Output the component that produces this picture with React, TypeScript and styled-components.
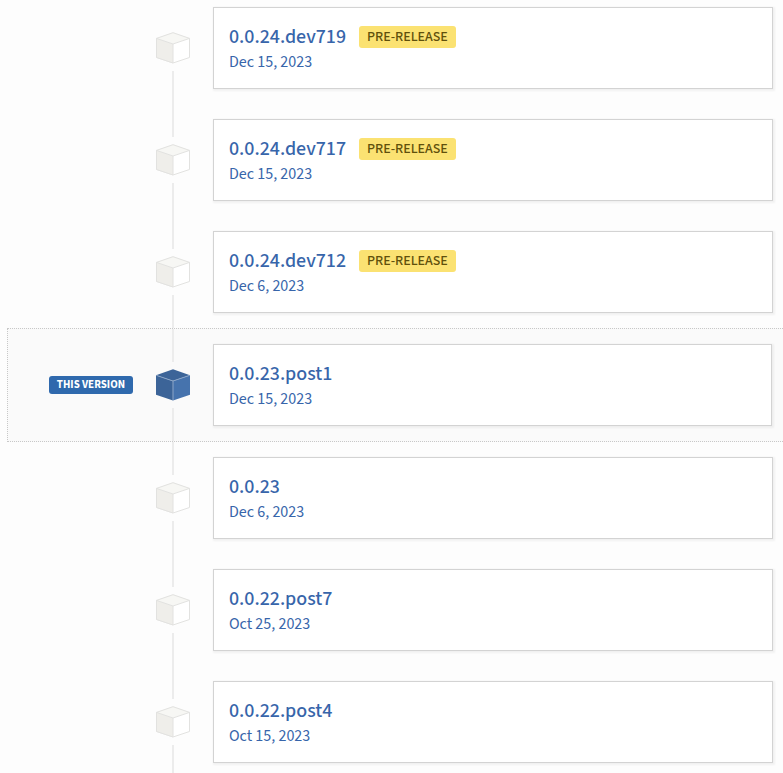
import React from "react";
import styled, { createGlobalStyle, css } from "styled-components";

const GlobalStyle = createGlobalStyle`
  * { box-sizing: border-box; }
  body {
    margin: 0;
    background: #fdfdfd;
    color: #3765aa;
    font-family: "Source Sans 3", "Noto Sans CJK SC", sans-serif;
  }
`;

const Viewport = styled.main`
  overflow: hidden;
`;

const Timeline = styled.ol`
  margin: -8px 0 0;
  padding: 0 0 0 7px;
  list-style: none;
`;

const Line = styled.span`
  flex: 1;
  width: 2px;
  background: #ececec;
`;

const Track = styled.div`
  align-self: stretch;
  display: flex;
  flex-direction: column;
  align-items: center;
`;

const Release = styled.li<{ $current?: boolean }>`
  display: grid;
  grid-template-columns: 125px 80px 1fr;
  align-items: center;
  border-left: 1px solid transparent;
  padding-right: 10px;

  &:first-child ${Line}:first-child {
    visibility: hidden;
  }

  ${({ $current }) =>
    $current &&
    css`
      background: #fafafa;
      border: 1px dotted #c8c8c8;
      border-right: 0;
      padding-right: 11px;
    `}
`;

const Label = styled.div`
  display: flex;
  justify-content: flex-end;
`;

const CurrentBadge = styled.span`
  padding: 0 8px;
  border-radius: 3px;
  background: #2f69ad;
  color: #fff;
  font-size: 11px;
  font-weight: 700;
  line-height: 18px;
  white-space: nowrap;
`;

const CubeIcon = styled.svg`
  display: block;
  flex: none;
  width: 36px;
  height: 46px;
`;

const Card = styled.a`
  display: block;
  margin: 15px 0;
  padding: 16px 15px 13px;
  border: 1px solid #d3d3d3;
  background: #fff;
  box-shadow: 1px 1px 2px 1px rgba(0, 0, 0, 0.05);
  color: inherit;
  text-decoration: none;
`;

const Version = styled.p`
  display: flex;
  align-items: center;
  gap: 13px;
  margin: 0;
  font-size: 20px;
  font-weight: 500;
  line-height: 26px;
`;

const PreRelease = styled.span`
  padding: 0 8px;
  border-radius: 3px;
  background: #fbe272;
  color: #5f500c;
  font-size: 14px;
  font-weight: 500;
  line-height: 22px;
`;

const ReleaseDate = styled.time`
  display: block;
  font-size: 16px;
  font-weight: 400;
  line-height: 25px;
`;

const lightCube = { top: "#f7f7f4", left: "#efeeea", right: "#ffffff", edge: "#e2e2e0" };
const blueCube = { top: "#3c6498", left: "#3c6498", right: "#4673ad", edge: "#8ca6c8" };

function Cube({ current }: { current?: boolean }) {
  const c = current ? blueCube : lightCube;
  return (
    <CubeIcon viewBox="0 0 36 46" aria-hidden="true">
      <path d="M1 13.2 18 7.3 35 13.2 18 19Z" fill={c.top} />
      <path d="M1 13.2 18 19V38.5L1 32.8Z" fill={c.left} />
      <path d="M35 13.2 18 19V38.5L35 32.8Z" fill={c.right} />
      <path d="M1.5 13.4 18 19 34.5 13.4M18 19V38" fill="none" stroke={c.edge} />
      {!current && (
        <path d="M1.5 13.4 18 7.7 34.5 13.4V32.5L18 38 1.5 32.5Z" fill="none" stroke={c.edge} />
      )}
    </CubeIcon>
  );
}

type ReleaseData = {
  version: string;
  date: string;
  iso: string;
  pre?: boolean;
  current?: boolean;
};

const releases: ReleaseData[] = [
  { version: "0.0.24.dev719", date: "Dec 15, 2023", iso: "2023-12-15", pre: true },
  { version: "0.0.24.dev717", date: "Dec 15, 2023", iso: "2023-12-15", pre: true },
  { version: "0.0.24.dev712", date: "Dec 6, 2023", iso: "2023-12-06", pre: true },
  { version: "0.0.23.post1", date: "Dec 15, 2023", iso: "2023-12-15", current: true },
  { version: "0.0.23", date: "Dec 6, 2023", iso: "2023-12-06" },
  { version: "0.0.22.post7", date: "Oct 25, 2023", iso: "2023-10-25" },
  { version: "0.0.22.post4", date: "Oct 15, 2023", iso: "2023-10-15" },
];

export default function App() {
  return (
    <>
      <GlobalStyle />
      <Viewport>
        <Timeline>
          {releases.map((r) => (
            <Release key={r.version} $current={r.current}>
              <Label>{r.current && <CurrentBadge>THIS VERSION</CurrentBadge>}</Label>
              <Track>
                <Line />
                <Cube current={r.current} />
                <Line />
              </Track>
              <Card href={`#${r.version}`}>
                <Version>
                  {r.version}
                  {r.pre && <PreRelease>PRE-RELEASE</PreRelease>}
                </Version>
                <ReleaseDate dateTime={r.iso}>{r.date}</ReleaseDate>
              </Card>
            </Release>
          ))}
        </Timeline>
      </Viewport>
    </>
  );
}
